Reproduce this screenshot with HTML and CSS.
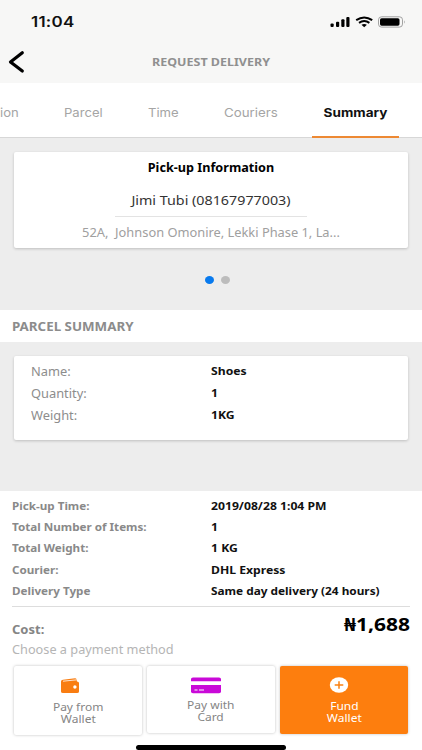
FILE: index.html
```html
<!DOCTYPE html>
<html lang="en">
<head>
<meta charset="utf-8">
<title>Request Delivery</title>
<link rel="stylesheet" href="styles.css">
</head>
<body>
<header class="top">
  <div class="status">
    <span class="clock">11:04</span>
    <svg class="signal" width="76" height="12" viewBox="0 0 76 12">
      <rect x="0.5" y="7.5" width="3.2" height="3.5" rx="1"/>
      <rect x="6" y="5.8" width="3.2" height="5.2" rx="1"/>
      <rect x="11.3" y="3.3" width="3.2" height="7.7" rx="1"/>
      <rect x="16.3" y="1" width="3.2" height="10" rx="1"/>
      <g fill="none" stroke="#000" stroke-width="2">
        <path d="M26.2 4.1Q34.2 -1.3 42.2 4.1"/>
        <path d="M29 6.9Q34.2 3.3 39.4 6.9"/>
      </g>
      <path d="M31.5 8.8Q34.2 7 36.9 8.8L34.2 11.2Z"/>
      <rect x="48.5" y=".8" width="24" height="10.3" rx="3" fill="none" stroke="#999" stroke-width=".9"/>
      <rect x="50" y="2.2" width="19.5" height="7.5" rx="1.6"/>
      <path d="M74 4.2q1.5 1.8 0 3.6z" fill="#999"/>
    </svg>
  </div>
  <div class="nav">
    <svg class="back" width="18" height="24" viewBox="0 0 18 24"><path d="M14.3 2.8L2.5 12L14.3 21"/></svg>
    <h1>REQUEST DELIVERY</h1>
  </div>
</header>
<nav class="tabs">
  <span class="tab t1">ion</span><span class="tab t2">Parcel</span><span class="tab t3">Time</span><span class="tab t4">Couriers</span><span class="tab active"><b>Summary</b></span>
</nav>
<section class="pickup">
  <div class="card person">
    <h2>Pick-up Information</h2>
    <p class="who"><span>Jimi Tubi (08167977003)</span></p>
    <p class="addr">52A,&nbsp; Johnson Omonire, Lekki Phase 1, La...</p>
  </div>
  <div class="dots"><i class="dot on"></i><i class="dot"></i></div>
</section>
<h3 class="heading"><span>PARCEL SUMMARY</span></h3>
<section class="parcel">
  <dl class="card facts">
    <dt>Name:</dt><dd>Shoes</dd>
    <dt>Quantity:</dt><dd>1</dd>
    <dt>Weight:</dt><dd>1KG</dd>
  </dl>
</section>
<section class="order">
  <dl class="details">
    <dt>Pick-up Time:</dt><dd>2019/08/28 1:04 PM</dd>
    <dt>Total Number of Items:</dt><dd>1</dd>
    <dt>Total Weight:</dt><dd>1 KG</dd>
    <dt>Courier:</dt><dd>DHL Express</dd>
    <dt>Delivery Type</dt><dd class="long">Same day delivery (24 hours)</dd>
  </dl>
  <div class="cost"><span class="label">Cost:</span><strong>₦1,688</strong></div>
  <p class="choose"><span>Choose a payment method</span></p>
  <div class="methods">
    <div class="method wallet">
      <svg width="20" height="16" viewBox="0 0 20 16">
        <path fill="#f97d11" d="M1 3.5Q1 2 3 1.8L15 .3Q16.6.1 16.6 2.3L17 3.4Q19 3.4 19 5V13.5Q19 15 17 15H3Q1 15 1 13.5Z"/>
        <path d="M3 3.2L16.2 1.9" stroke="#fff" stroke-width=".8"/>
        <circle cx="14.9" cy="9" r="1.7" fill="#fff"/>
      </svg>
      <p>Pay from</p><p>Wallet</p>
    </div>
    <div class="method bankcard">
      <svg width="30" height="17" viewBox="0 0 30 17">
        <path fill="#c909d8" d="M0 4.3V2Q0 .4 2 .4H28Q30 .4 30 2V4.3ZM0 8H30V14.8Q30 16.2 28 16.2H2Q0 16.2 0 14.8Z"/>
        <path d="M3.5 13H6.5M8 13H13" stroke="#fff" stroke-width="1.2"/>
      </svg>
      <p>Pay with</p><p>Card</p>
    </div>
    <div class="method fund">
      <svg width="20" height="16" viewBox="0 0 20 16">
        <ellipse cx="10" cy="8" rx="9.2" ry="7.7" fill="#fff"/>
        <path d="M5.7 8H14.3M10 4.3V11.7" stroke="#fb8112" stroke-width="1.5"/>
      </svg>
      <p>Fund</p><p>Wallet</p>
    </div>
  </div>
  <div class="home"></div>
</section>
</body>
</html>
```
FILE: styles.css
```css
* { box-sizing: border-box; margin: 0; padding: 0; }
body { width: 422px; height: 750px; overflow: hidden; background: #fff; font: 12px/16px "Noto Sans", sans-serif; color: #111; }
svg { display: block; }
.top { height: 83px; background: #f7f7f6; }
.status { height: 43px; display: flex; justify-content: space-between; padding: 13px 16px 0 31px; }
.clock { font: 600 14.5px/18px Inter, sans-serif; letter-spacing: .2px; transform: scaleX(1.17); transform-origin: left; }
.signal { margin-top: 3px; }
.nav { display: grid; grid-template-columns: 18px 1fr 18px; padding: 7px 8px 0; align-items: center; height: 31px; }
.back path { fill: none; stroke: #000; stroke-width: 3.2; stroke-linecap: round; stroke-linejoin: round; }
.nav h1 { font-size: 11px; line-height: 16px; color: #909090; text-align: center; transform: scaleX(1.135); }
.tabs { height: 55px; display: flex; font: 12px/20px Inter, sans-serif; color: #a5a5a5; padding-top: 20px; border-bottom: 1px solid #d7d7d7; }
.tab { white-space: nowrap; transform: scaleX(1.09); transform-origin: left; }
.t1 { width: 64px; }
.t2 { width: 84px; }
.t3 { width: 76px; }
.t4 { width: 88px; transform: scaleX(1.11); }
.active { width: 87px; height: 35px; text-align: center; color: #111; border-bottom: 2px solid #ed8933; transform: none; }
.active b { display: block; transform: scaleX(1.13); }
.card { background: #fff; border-radius: 2px; box-shadow: 0 1px 3px rgba(0,0,0,.2); }
.pickup { height: 172px; background: #ededed; padding: 14px 14px 0; }
.person { height: 96px; text-align: center; padding-top: 8px; white-space: nowrap; }
.person h2 { font-size: 11.5px; line-height: 16px; color: #000; transform: scaleX(1.1); }
.who { width: 192px; height: 33px; margin: 8px auto 0; padding-top: 8px; border-bottom: 1px solid #e3e3e3; font-size: 13px; color: #333; }
.who span { display: block; transform: scaleX(1.1); }
.addr { color: #a0a0a0; margin-top: 8px; transform: scaleX(1.07); }
.dots { display: flex; justify-content: center; gap: 7px; margin-top: 28px; padding-left: 12px; }
.dot { width: 9px; height: 8px; border-radius: 50%; background: #bcbcbc; }
.dot.on { background: #087aee; }
.heading { height: 32px; padding-left: 12px; font-size: 11.5px; line-height: 33px; color: #8c8c8c; }
.heading span { display: inline-block; transform: scaleX(1.16); transform-origin: left; }
.parcel { height: 149px; background: #ededed; padding: 14px 14px 0; }
.facts { height: 84px; display: grid; grid-template-columns: 180px 1fr; grid-auto-rows: 22px; align-content: start; padding: 5px 0 0 17px; line-height: 22px; color: #8d8d8d; }
dt, dd { transform: scaleX(1.07); transform-origin: left; }
dd { color: #111; font-size: 10.5px; font-weight: 700; transform: scaleX(1.16); }
.facts dd { line-height: 21px; }
dd.long { transform: scaleX(1.125); }
.order { height: 259px; padding-top: 5px; }
.details { display: grid; grid-template-columns: 199px 1fr; grid-auto-rows: 21.2px; height: 111px; margin: 0 12px; border-bottom: 1px solid #ddd; font-size: 10.5px; line-height: 21px; }
.details dt { color: #898989; font-weight: 700; white-space: nowrap; transform: scaleX(1.11); }
.cost { display: flex; justify-content: space-between; height: 34px; padding: 6px 12px 0; }
.label { font-size: 11.5px; line-height: 34px; font-weight: 700; color: #858585; transform: scaleX(1.13); transform-origin: left; }
.cost strong { font-size: 17.5px; line-height: 22px; color: #000; transform: scaleX(1.2); transform-origin: right; }
.choose { padding-left: 12px; line-height: 18px; color: #b5b5b5; }
.choose span { display: inline-block; transform: scaleX(1.06); transform-origin: left; }
.methods { display: grid; grid-template-columns: 128px 128px 128px; gap: 5px; margin: 7px 14px 0; align-items: start; }
.method { height: 69px; display: flex; flex-direction: column; align-items: center; text-align: center; background: #fff; border-radius: 2px; box-shadow: 0 0 3px rgba(0,0,0,.26); padding-top: 12px; font-size: 10.5px; line-height: 12px; color: #858585; }
.method p { transform: scaleX(1.14); }
.wallet svg { margin: 0 17px 7px 0; }
.bankcard { height: 67px; padding-top: 11px; }
.bankcard svg { margin: 0 11px 5px 0; }
.fund { background: #fd7e0e; color: #fff; height: 68px; padding-top: 11px; }
.fund svg { margin: 0 10px 7px 0; }
.home { width: 150px; height: 5px; margin: 10px 0 0 136px; border-radius: 3px; background: #000; }
```
